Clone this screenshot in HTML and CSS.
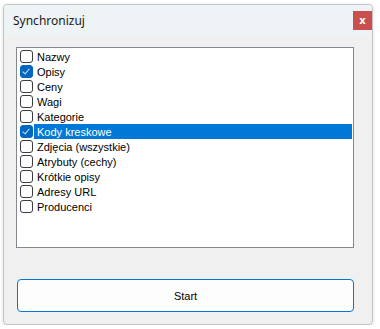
FILE: index.html
```html
<!DOCTYPE html>
<html>

<head>
    <title>Synchronizuj</title>
    <link rel="stylesheet" href="styles.css">
</head>

<body>
    <div class="window">
        <div class="titlebar">
            <span class="title">Synchronizuj</span>
            <button class="close">x</button>
        </div>
        <div class="content">
            <ul class="checklist">
                <li><span class="box"></span>Nazwy</li>
                <li><span class="box checked"></span>Opisy</li>
                <li><span class="box"></span>Ceny</li>
                <li><span class="box"></span>Wagi</li>
                <li><span class="box"></span>Kategorie</li>
                <li class="selected"><span class="box checked"></span><span class="label">Kody kreskowe</span></li>
                <li><span class="box"></span>Zdjęcia (wszystkie)</li>
                <li><span class="box"></span>Atrybuty (cechy)</li>
                <li><span class="box"></span>Krótkie opisy</li>
                <li><span class="box"></span>Adresy URL</li>
                <li><span class="box"></span>Producenci</li>
            </ul>
            <button class="start">Start</button>
        </div>
    </div>
</body>

</html>
```

FILE: styles.css
```css
body {
    margin: 0;
    padding: 0;
    background-color: #fff;
    font-family: "Liberation Sans", Arial, sans-serif;
}

.window {
    margin: 4px 0 0 3px;
    width: 368px;
    height: 319px;
    border: 1px solid #c4c4c4;
    border-radius: 4px;
    background-color: #f0f0f0;
    box-shadow: 0 1px 4px rgba(0, 0, 0, 0.12);
    display: flex;
    flex-direction: column;
    overflow: hidden;
}

.titlebar {
    height: 30px;
    background-color: #eef3f6;
    display: flex;
    align-items: center;
    justify-content: space-between;
    padding-left: 9px;
}

.title {
    font-family: "Noto Sans", sans-serif;
    font-size: 12px;
    color: #1a1a1a;
}

.close {
    width: 19px;
    height: 19px;
    margin-top: 1px;
    border: none;
    padding: 0;
    background-color: #c9504f;
    color: #fff;
    font-family: "DejaVu Sans", sans-serif;
    font-weight: bold;
    font-size: 10px;
    line-height: 17px;
}

.content {
    padding: 12px 0 0 12px;
}

/* List of checkboxes */
.checklist {
    list-style: none;
    margin: 0;
    padding: 1px 0;
    width: 336px;
    height: 197px;
    background-color: #fff;
    border: 1px solid #828790;
}

.checklist li {
    height: 15px;
    display: flex;
    align-items: center;
    font-size: 11px;
    color: #000;
    padding-left: 3px;
    margin-right: 1px;
}

.box {
    width: 11px;
    height: 11px;
    border: 1px solid #3c3c3c;
    border-radius: 3px;
    margin-right: 4px;
    flex-shrink: 0;
    position: relative;
}

.box.checked {
    background-color: #0067c0;
    border-color: #0067c0;
}

.box.checked::after {
    content: "";
    position: absolute;
    left: 3px;
    top: 1px;
    width: 3px;
    height: 6px;
    border: solid #cfe3f5;
    border-width: 0 1px 1px 0;
    transform: rotate(40deg);
}

.checklist li.selected .label {
    flex: 1;
    align-self: stretch;
    display: flex;
    align-items: center;
    margin-left: -3px;
    padding-left: 3px;
    background-color: #0078d7;
    color: #fff;
}

.start {
    margin: 31px 0 0 1px;
    width: 337px;
    height: 33px;
    border: 1px solid #0078d4;
    border-radius: 4px;
    background-color: #fdfdfd;
    font-family: "Liberation Sans", Arial, sans-serif;
    font-size: 11px;
    color: #000;
}
```
